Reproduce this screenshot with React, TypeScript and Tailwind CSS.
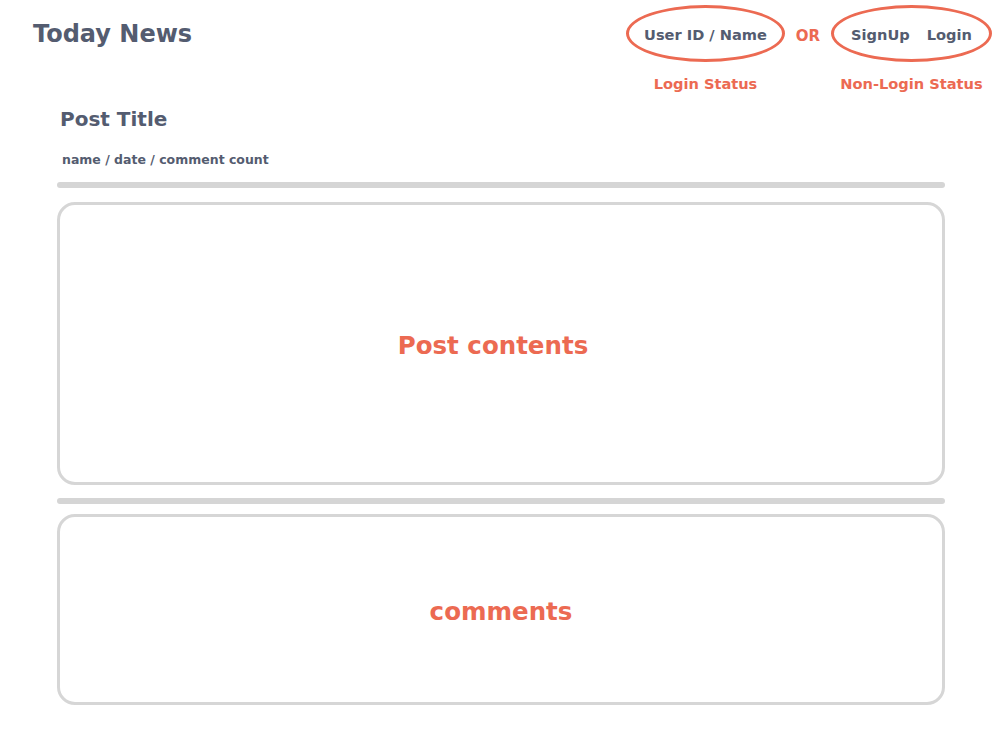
import React from 'react';

const font = { fontFamily: '"DejaVu Sans", Verdana, sans-serif' };

const Oval = ({ children, width }: { children: React.ReactNode; width: string }) => (
  <div className={`${width} h-[57px] pt-[3px] rounded-[50%] border-[3px] border-[#ec6a52] flex items-center justify-center`}>
    {children}
  </div>
);

export default function App() {
  return (
    <div className="w-[1002px] h-[738px] bg-white text-[#545c70]" style={font}>
      <header className="flex items-start justify-between pl-[33px] pr-[10px] pt-[5px]">
        <h1 className="text-[24px] leading-[58px] font-bold">Today News</h1>
        <div className="flex items-start">
          <div className="flex flex-col items-center">
            <Oval width="w-[159px]">
              <span className="text-[14.6px] font-bold">User ID / Name</span>
            </Oval>
            <span className="mt-[13px] text-[14.6px] leading-[18px] font-bold text-[#ec6a52]">Login Status</span>
          </div>
          <span className="w-[46px] pt-[2px] text-center text-[15px] leading-[58px] font-bold text-[#ec6a52]">OR</span>
          <div className="flex flex-col items-center">
            <Oval width="w-[161px]">
              <span className="text-[14.6px] font-bold">SignUp</span>
              <span className="ml-[17px] text-[14.6px] font-bold">Login</span>
            </Oval>
            <span className="mt-[13px] text-[14.6px] leading-[18px] font-bold text-[#ec6a52]">Non-Login Status</span>
          </div>
        </div>
      </header>

      <main className="mx-[57px] w-[888px] mt-[14px]">
        <h2 className="ml-[3px] text-[20px] leading-[24px] font-bold">Post Title</h2>
        <p className="ml-[5px] mt-[21px] text-[12.5px] leading-[16px] font-bold">name / date / comment count</p>
        <div className="mt-[14px] h-[6px] rounded-full bg-[#d5d5d5]" />
        <section className="mt-[14px] h-[283px] pt-[6px] rounded-[18px] border-[3px] border-[#d6d6d6] flex items-center justify-center">
          <span className="mr-[16px] text-[24.5px] font-bold text-[#ec6a52]">Post contents</span>
        </section>
        <div className="mt-[13px] h-[6px] rounded-full bg-[#d5d5d5]" />
        <section className="mt-[10px] h-[191px] pt-[6px] rounded-[18px] border-[3px] border-[#d6d6d6] flex items-center justify-center">
          <span className="text-[24.5px] font-bold text-[#ec6a52]">comments</span>
        </section>
      </main>
    </div>
  );
}
